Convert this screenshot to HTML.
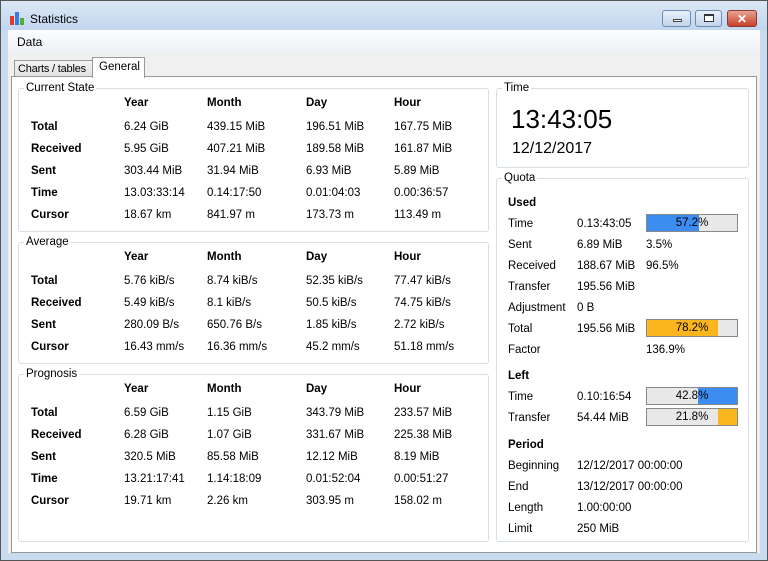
<!DOCTYPE html>
<html><head><meta charset="utf-8"><style>
*{margin:0;padding:0;box-sizing:border-box}
body{width:768px;height:561px;overflow:hidden;background:#c9dbef;font-family:"Liberation Sans",sans-serif;font-size:11.5px;color:#000;position:relative}
.a{position:absolute}
.t{position:absolute;line-height:14px;white-space:nowrap;margin-top:1px}
.b{font-weight:bold}
.g{position:absolute;border:1px solid #d5dfe5;border-radius:3px}
.gl{position:absolute;background:#fff;padding:0 2px;line-height:13px;font-size:11.5px}
.bar{position:absolute;width:92px;height:18px;border:1px solid #888;background:#e8e8e8;overflow:hidden}
.bar i{position:absolute;top:0;bottom:0}
.bar span{position:absolute;left:0;right:0;top:1px;text-align:center;line-height:14px}
.btn{position:absolute;top:10px;height:17px;border:1px solid #6d8bb1;border-radius:3px;background:linear-gradient(#e8f0fa,#c3d4ea)}
</style></head><body>
<div class="a" style="left:0;top:0;width:768px;height:30px;background:linear-gradient(#dbe8f6,#c2d6ee);border-top:1px solid #555"></div>
<div class="a" style="left:0;top:0;width:1px;height:561px;background:#555"></div>
<div class="a" style="left:767px;top:0;width:1px;height:561px;background:#555"></div>
<svg class="a" style="left:9px;top:11px" width="16" height="14"><rect x="1" y="5" width="4" height="9" fill="#e23a2a"/><rect x="6" y="1" width="4" height="13" fill="#3a7be2"/><rect x="11" y="7" width="4" height="7" fill="#4cae3a"/></svg>
<div class="t" style="left:30px;top:11px;font-size:12px">Statistics</div>
<div class="btn" style="left:662px;width:29px"><div class="a" style="left:10px;top:8px;width:9px;height:3px;border:1px solid #444;background:#fff"></div></div>
<div class="btn" style="left:695px;width:27px"><div class="a" style="left:8px;top:3px;width:10px;height:8px;border:1px solid #333;border-top-width:2px;background:#fff"></div></div>
<div class="btn" style="left:727px;width:30px;border-color:#8a3a30;background:linear-gradient(#e8a393,#c8402c)"><div class="t b" style="left:9px;top:0px;color:#fff;font-size:12px">✕</div></div>
<div class="a" style="left:8px;top:30px;width:752px;height:523px;background:#f0f0f0"></div>
<div class="a" style="left:8px;top:30px;width:752px;height:22px;background:linear-gradient(#fdfdfe,#eef1f6)"></div>
<div class="t" style="left:17px;top:34px;font-size:12px">Data</div>
<div class="a" style="left:14px;top:60px;width:79px;height:17px;border:1px solid #999;border-bottom:none;background:linear-gradient(#f3f3f3,#e0e0e0)"></div>
<div class="t" style="left:18px;top:61px;font-size:11px;letter-spacing:-0.2px">Charts / tables</div>
<div class="a" style="left:11px;top:76px;width:746px;height:477px;border:1px solid #999;background:#fff"></div>
<div class="a" style="left:92px;top:57px;width:53px;height:21px;border:1px solid #999;border-bottom:none;background:#fff"></div>
<div class="t" style="left:99px;top:59px">General</div>

<!-- Current State -->
<div class="g" style="left:18px;top:88px;width:471px;height:144px"></div>
<div class="gl" style="left:24px;top:82px">Current State</div>
<div class="t b" style="left:124px;top:95px">Year</div><div class="t b" style="left:207px;top:95px">Month</div><div class="t b" style="left:306px;top:95px">Day</div><div class="t b" style="left:394px;top:95px">Hour</div>
<div class="t b" style="left:31px;top:119px">Total</div><div class="t" style="left:124px;top:119px">6.24 GiB</div><div class="t" style="left:207px;top:119px">439.15 MiB</div><div class="t" style="left:306px;top:119px">196.51 MiB</div><div class="t" style="left:394px;top:119px">167.75 MiB</div>
<div class="t b" style="left:31px;top:141px">Received</div><div class="t" style="left:124px;top:141px">5.95 GiB</div><div class="t" style="left:207px;top:141px">407.21 MiB</div><div class="t" style="left:306px;top:141px">189.58 MiB</div><div class="t" style="left:394px;top:141px">161.87 MiB</div>
<div class="t b" style="left:31px;top:163px">Sent</div><div class="t" style="left:124px;top:163px">303.44 MiB</div><div class="t" style="left:207px;top:163px">31.94 MiB</div><div class="t" style="left:306px;top:163px">6.93 MiB</div><div class="t" style="left:394px;top:163px">5.89 MiB</div>
<div class="t b" style="left:31px;top:185px">Time</div><div class="t" style="left:124px;top:185px">13.03:33:14</div><div class="t" style="left:207px;top:185px">0.14:17:50</div><div class="t" style="left:306px;top:185px">0.01:04:03</div><div class="t" style="left:394px;top:185px">0.00:36:57</div>
<div class="t b" style="left:31px;top:207px">Cursor</div><div class="t" style="left:124px;top:207px">18.67 km</div><div class="t" style="left:207px;top:207px">841.97 m</div><div class="t" style="left:306px;top:207px">173.73 m</div><div class="t" style="left:394px;top:207px">113.49 m</div>

<!-- Average -->
<div class="g" style="left:18px;top:242px;width:471px;height:122px"></div>
<div class="gl" style="left:24px;top:236px">Average</div>
<div class="t b" style="left:124px;top:249px">Year</div><div class="t b" style="left:207px;top:249px">Month</div><div class="t b" style="left:306px;top:249px">Day</div><div class="t b" style="left:394px;top:249px">Hour</div>
<div class="t b" style="left:31px;top:273px">Total</div><div class="t" style="left:124px;top:273px">5.76 kiB/s</div><div class="t" style="left:207px;top:273px">8.74 kiB/s</div><div class="t" style="left:306px;top:273px">52.35 kiB/s</div><div class="t" style="left:394px;top:273px">77.47 kiB/s</div>
<div class="t b" style="left:31px;top:295px">Received</div><div class="t" style="left:124px;top:295px">5.49 kiB/s</div><div class="t" style="left:207px;top:295px">8.1 kiB/s</div><div class="t" style="left:306px;top:295px">50.5 kiB/s</div><div class="t" style="left:394px;top:295px">74.75 kiB/s</div>
<div class="t b" style="left:31px;top:317px">Sent</div><div class="t" style="left:124px;top:317px">280.09 B/s</div><div class="t" style="left:207px;top:317px">650.76 B/s</div><div class="t" style="left:306px;top:317px">1.85 kiB/s</div><div class="t" style="left:394px;top:317px">2.72 kiB/s</div>
<div class="t b" style="left:31px;top:339px">Cursor</div><div class="t" style="left:124px;top:339px">16.43 mm/s</div><div class="t" style="left:207px;top:339px">16.36 mm/s</div><div class="t" style="left:306px;top:339px">45.2 mm/s</div><div class="t" style="left:394px;top:339px">51.18 mm/s</div>

<!-- Prognosis -->
<div class="g" style="left:18px;top:374px;width:471px;height:168px"></div>
<div class="gl" style="left:24px;top:368px">Prognosis</div>
<div class="t b" style="left:124px;top:381px">Year</div><div class="t b" style="left:207px;top:381px">Month</div><div class="t b" style="left:306px;top:381px">Day</div><div class="t b" style="left:394px;top:381px">Hour</div>
<div class="t b" style="left:31px;top:405px">Total</div><div class="t" style="left:124px;top:405px">6.59 GiB</div><div class="t" style="left:207px;top:405px">1.15 GiB</div><div class="t" style="left:306px;top:405px">343.79 MiB</div><div class="t" style="left:394px;top:405px">233.57 MiB</div>
<div class="t b" style="left:31px;top:427px">Received</div><div class="t" style="left:124px;top:427px">6.28 GiB</div><div class="t" style="left:207px;top:427px">1.07 GiB</div><div class="t" style="left:306px;top:427px">331.67 MiB</div><div class="t" style="left:394px;top:427px">225.38 MiB</div>
<div class="t b" style="left:31px;top:449px">Sent</div><div class="t" style="left:124px;top:449px">320.5 MiB</div><div class="t" style="left:207px;top:449px">85.58 MiB</div><div class="t" style="left:306px;top:449px">12.12 MiB</div><div class="t" style="left:394px;top:449px">8.19 MiB</div>
<div class="t b" style="left:31px;top:471px">Time</div><div class="t" style="left:124px;top:471px">13.21:17:41</div><div class="t" style="left:207px;top:471px">1.14:18:09</div><div class="t" style="left:306px;top:471px">0.01:52:04</div><div class="t" style="left:394px;top:471px">0.00:51:27</div>
<div class="t b" style="left:31px;top:493px">Cursor</div><div class="t" style="left:124px;top:493px">19.71 km</div><div class="t" style="left:207px;top:493px">2.26 km</div><div class="t" style="left:306px;top:493px">303.95 m</div><div class="t" style="left:394px;top:493px">158.02 m</div>

<!-- Time -->
<div class="g" style="left:496px;top:88px;width:253px;height:80px"></div>
<div class="gl" style="left:502px;top:82px">Time</div>
<div class="t" style="left:511px;top:103px;font-size:26px;line-height:30px">13:43:05</div>
<div class="t" style="left:512px;top:139px;font-size:16px;line-height:18px">12/12/2017</div>

<!-- Quota -->
<div class="g" style="left:496px;top:178px;width:253px;height:364px"></div>
<div class="gl" style="left:502px;top:172px">Quota</div>
<div class="t b" style="left:508px;top:195px">Used</div>
<div class="t" style="left:508px;top:216px">Time</div><div class="t" style="left:577px;top:216px">0.13:43:05</div>
<div class="bar" style="left:646px;top:214px"><i style="left:0;width:52px;background:#3c8cf2"></i><span>57.2%</span></div>
<div class="t" style="left:508px;top:237px">Sent</div><div class="t" style="left:577px;top:237px">6.89 MiB</div><div class="t" style="left:646px;top:237px">3.5%</div>
<div class="t" style="left:508px;top:258px">Received</div><div class="t" style="left:577px;top:258px">188.67 MiB</div><div class="t" style="left:646px;top:258px">96.5%</div>
<div class="t" style="left:508px;top:279px">Transfer</div><div class="t" style="left:577px;top:279px">195.56 MiB</div>
<div class="t" style="left:508px;top:300px">Adjustment</div><div class="t" style="left:577px;top:300px">0 B</div>
<div class="t" style="left:508px;top:321px">Total</div><div class="t" style="left:577px;top:321px">195.56 MiB</div>
<div class="bar" style="left:646px;top:319px"><i style="left:0;width:71px;background:#fbb61f"></i><span>78.2%</span></div>
<div class="t" style="left:508px;top:342px">Factor</div><div class="t" style="left:646px;top:342px">136.9%</div>
<div class="t b" style="left:508px;top:368px">Left</div>
<div class="t" style="left:508px;top:389px">Time</div><div class="t" style="left:577px;top:389px">0.10:16:54</div>
<div class="bar" style="left:646px;top:387px"><i style="right:0;width:39px;background:#3c8cf2"></i><span>42.8%</span></div>
<div class="t" style="left:508px;top:410px">Transfer</div><div class="t" style="left:577px;top:410px">54.44 MiB</div>
<div class="bar" style="left:646px;top:408px"><i style="right:0;width:19px;background:#fbb61f"></i><span>21.8%</span></div>
<div class="t b" style="left:508px;top:437px">Period</div>
<div class="t" style="left:508px;top:458px">Beginning</div><div class="t" style="left:577px;top:458px">12/12/2017 00:00:00</div>
<div class="t" style="left:508px;top:479px">End</div><div class="t" style="left:577px;top:479px">13/12/2017 00:00:00</div>
<div class="t" style="left:508px;top:500px">Length</div><div class="t" style="left:577px;top:500px">1.00:00:00</div>
<div class="t" style="left:508px;top:521px">Limit</div><div class="t" style="left:577px;top:521px">250 MiB</div>
<div class="a" style="left:0;top:560px;width:768px;height:1px;background:#555"></div>
</body></html>
